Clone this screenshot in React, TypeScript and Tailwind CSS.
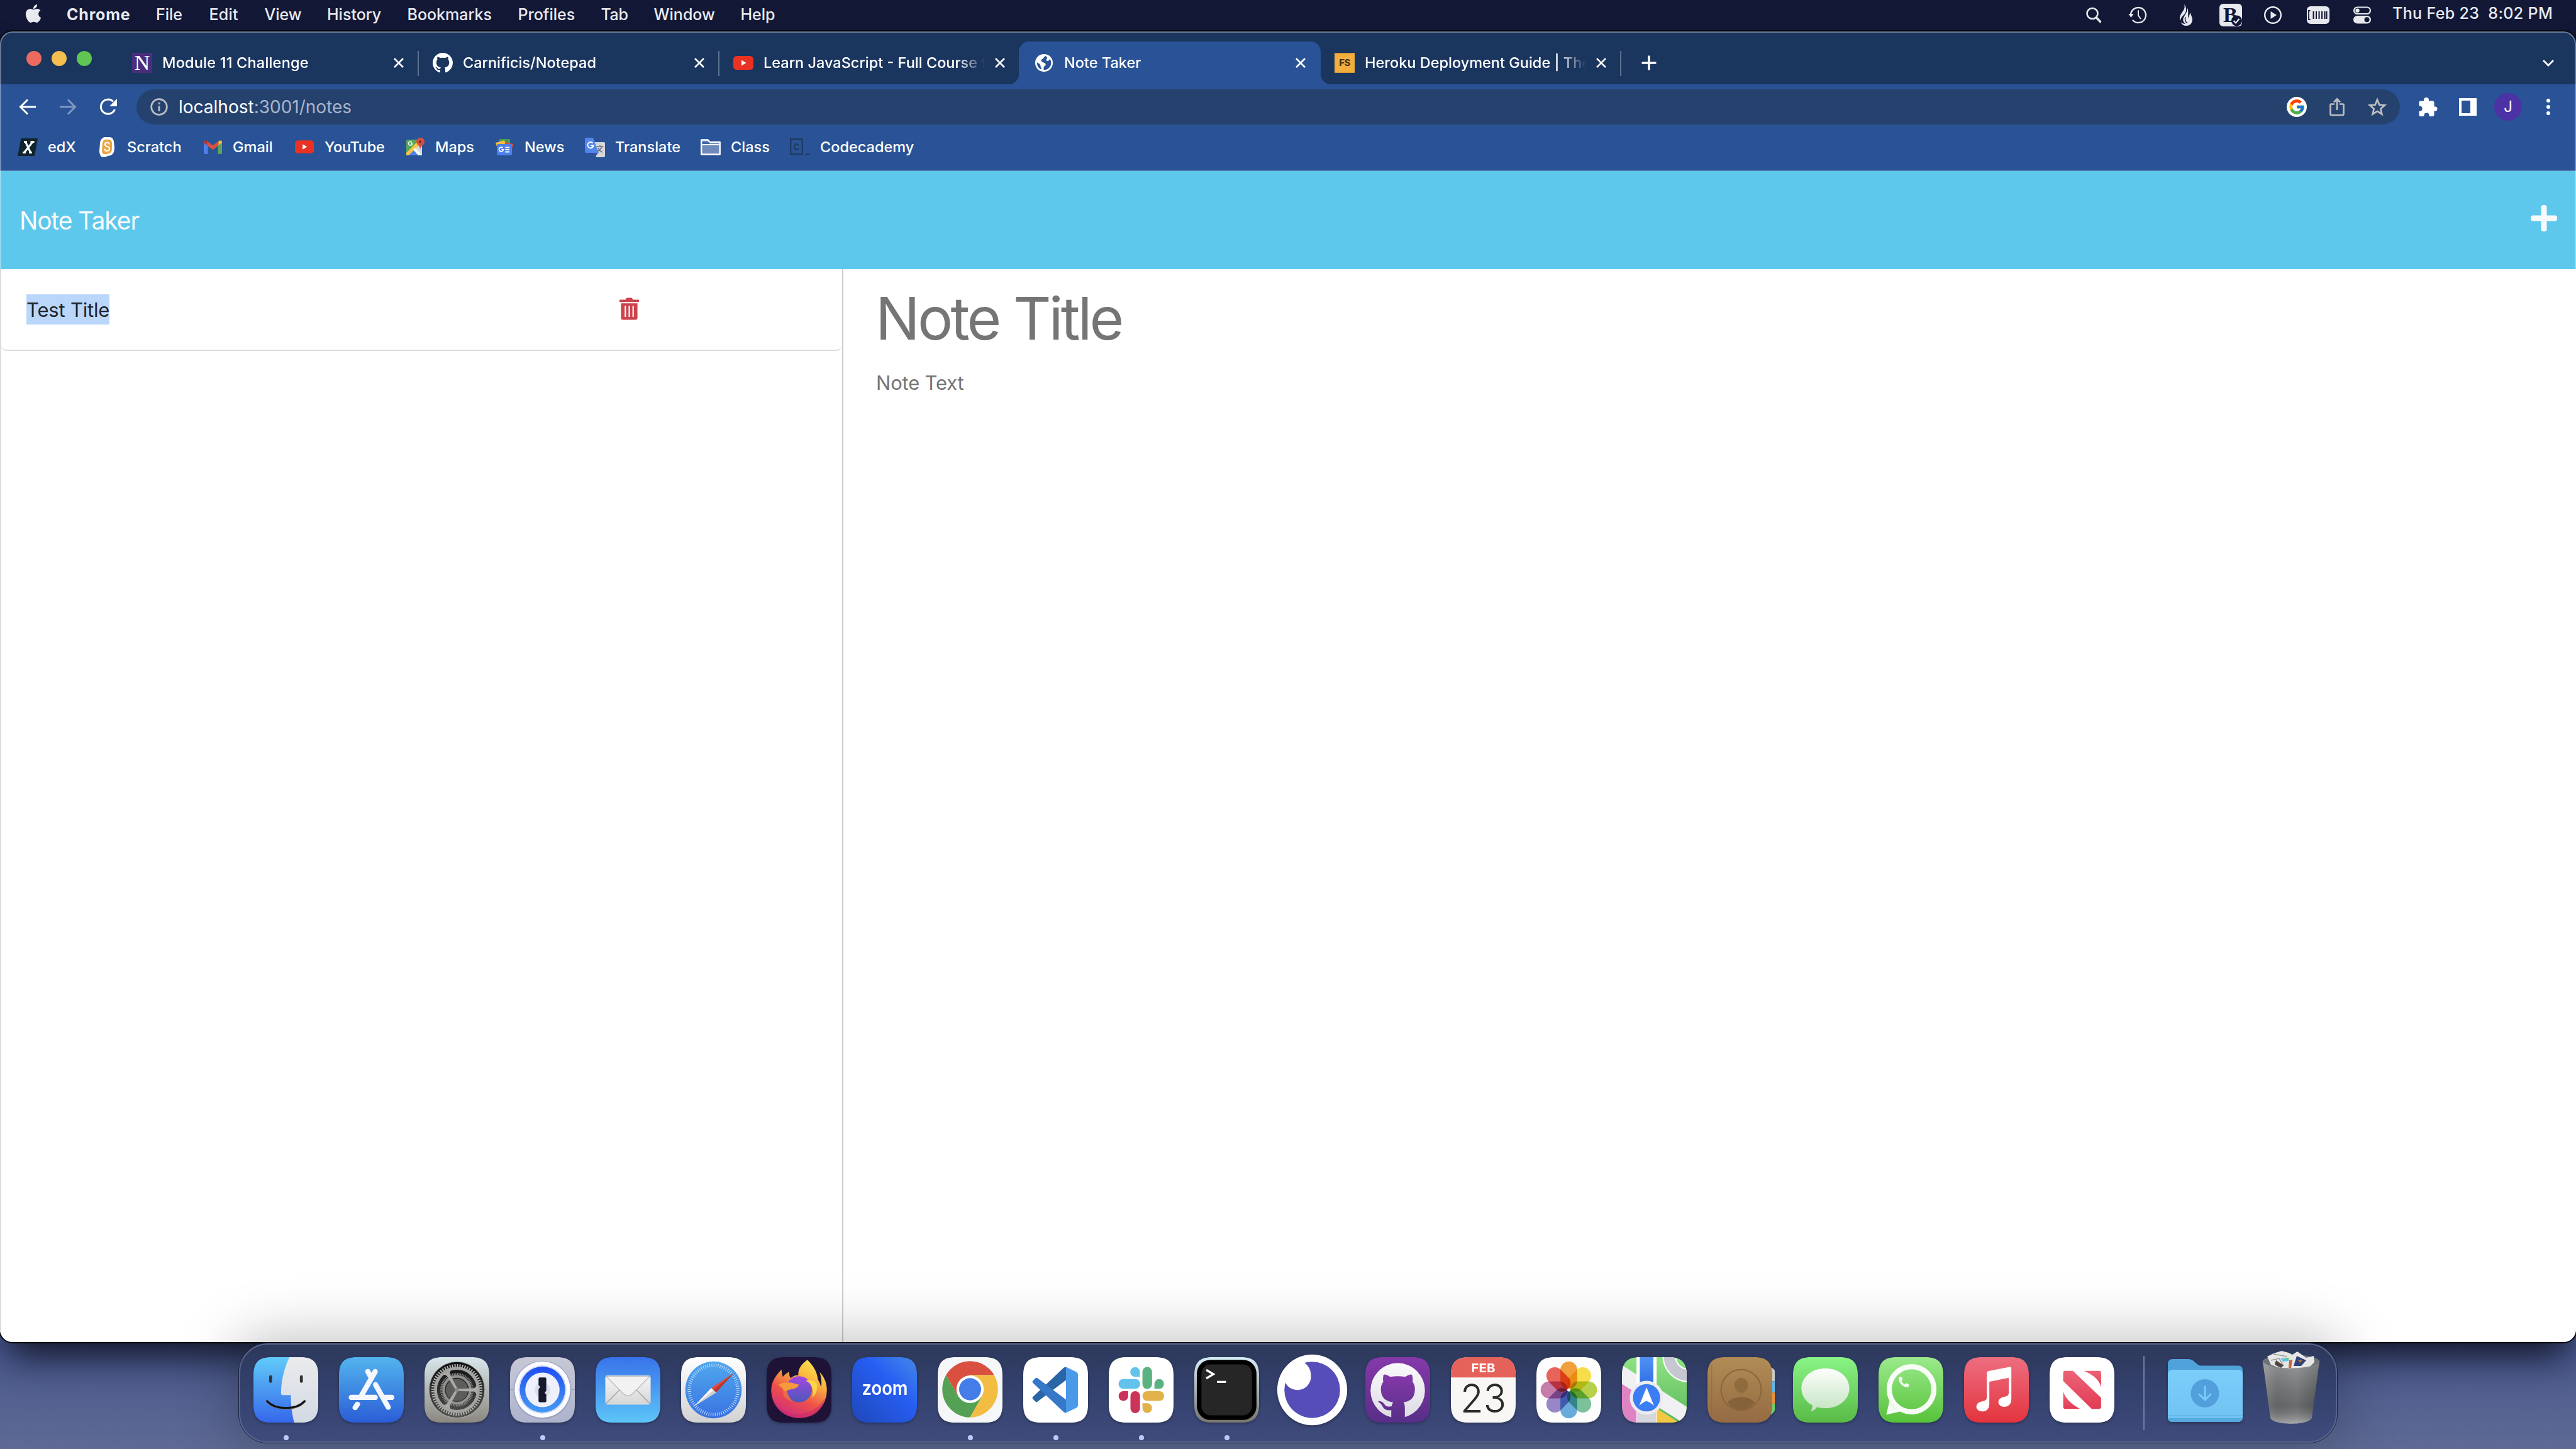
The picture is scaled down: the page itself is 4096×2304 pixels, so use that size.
import React from "react";
import { FaApple, FaPlus, FaPhoneAlt } from "react-icons/fa";
import { FcGoogle } from "react-icons/fc";

type Kids = { children?: React.ReactNode };

/* ---------------------------------------------------------------- menu bar */

const menus = [
  { t: "File", c: "w-[84.5px]" },
  { t: "Edit", c: "w-[88px] tracking-[0.2px]" },
  { t: "View", c: "w-[99.5px]" },
  { t: "History", c: "w-[127.5px]" },
  { t: "Bookmarks", c: "w-[176px]" },
  { t: "Profiles", c: "w-[132px]" },
  { t: "Tab", c: "w-[84px] tracking-[-0.4px]" },
  { t: "Window", c: "w-[138px]" },
  { t: "Help", c: "w-[60px]" },
];

function Slot({ c, children }: Kids & { c: string }) {
  return <div className={"flex h-full items-center justify-center " + c}>{children}</div>;
}

function MenuBar() {
  return (
    <div className="flex h-[50px] shrink-0 items-center pb-[3px] text-[25px] font-medium whitespace-pre text-[#e9eaef]">
      <div className="ml-[37px] w-[69px]">
        <FaApple className="mb-[4px] h-[33px] w-[32px]" />
      </div>
      <div className="w-[142px] font-bold tracking-[0.8px]">Chrome</div>
      {menus.map((m) => (
        <div key={m.t} className={m.c}>{m.t}</div>
      ))}
      <div className="ml-auto flex h-[50px] items-center">
        <Slot c="w-[70px]">
          <svg className="h-[28px] w-[28px]" viewBox="0 0 28 28" fill="none" stroke="currentColor" strokeLinecap="round">
            <circle cx="12" cy="11.500" r="8.500" strokeWidth="2.600" />
            <path d="M18.500 18l6 6.500" strokeWidth="3.400" />
          </svg>
        </Slot>
        <Slot c="w-[70px]">
          <svg className="h-[30px] w-[30px]" viewBox="0 0 30 30" fill="none" stroke="currentColor" strokeWidth="2.300" strokeLinecap="round">
            <path d="M4 15a12 12 0 1 1 3.500 8.500" />
            <path d="M0.500 13h8l-4 6z" fill="currentColor" stroke="none" />
            <path d="M16 8v7.500l3.500 5" strokeWidth="2" />
          </svg>
        </Slot>
        <Slot c="w-[84px]">
          <svg className="h-[34px] w-[24px]" viewBox="0 0 24 34" fill="currentColor">
            <path d="M9 0C11 6 8 9 5.500 13C2 18 1 22 3 26C3.500 21 6 19 9 16C13 12 13 4 9 0Z" />
            <path d="M13.500 5C15 11 11 15 9 19C6 24 7 28 11 31C8 31 5 30 3.500 28C5 32 8 34 12.500 34C18 34 22 30 22 24C22 20 19.500 18 19 13C17 16 17 19 16 22C14 18 17 10 13.500 5Z" />
            <path d="M11 20C9.500 24 11 28 14 29.500" fill="none" stroke="#131836" strokeWidth="1.400" />
          </svg>
        </Slot>
        <Slot c="w-[58px]">
          <svg className="h-[36px] w-[36px]" viewBox="0 0 36 36">
            <rect width="36" height="36" rx="6" fill="#e9eaef" />
            <text x="6" y="29" fontSize="34" fontWeight="700" fill="#131836" className="font-['Liberation_Serif']">B</text>
            <circle cx="27.500" cy="27" r="8.500" fill="#131836" />
            <path d="M22.500 27l3.500 3.500 5.500-6.500" fill="none" stroke="#e9eaef" strokeWidth="2.200" />
          </svg>
        </Slot>
        <Slot c="w-[76px]">
          <svg className="h-[30px] w-[30px]" viewBox="0 0 30 30">
            <circle cx="15" cy="15" r="12.800" fill="none" stroke="currentColor" strokeWidth="2.400" />
            <path d="M11.500 9v12l9.500-6z" fill="currentColor" />
          </svg>
        </Slot>
        <Slot c="w-[68px]">
          <svg className="h-[28px] w-[36px]" viewBox="0 0 36 28">
            <rect width="36" height="28" rx="6" fill="#e9eaef" />
            <path d="M5.500 7H3v14h2.500" fill="none" stroke="#131836" strokeWidth="1.800" />
            <path d="M10.500 8v12M15 8v12M19.500 8v12M24 8v12M28.500 8v12M31.500 8v12" fill="none" stroke="#131836" strokeWidth="2" />
          </svg>
        </Slot>
        <Slot c="w-[72px]">
          <svg className="h-[28px] w-[30px]" viewBox="0 0 30 28">
            <rect x="2" y="1.500" width="26" height="10.500" rx="5.250" fill="none" stroke="currentColor" strokeWidth="2.200" />
            <circle cx="7.500" cy="6.700" r="3.200" fill="currentColor" />
            <rect x="1" y="15" width="28" height="12.500" rx="6.250" fill="currentColor" />
            <circle cx="22.500" cy="21.200" r="4" fill="#131836" />
          </svg>
        </Slot>
        <div className="mb-[3px] ml-[12px] w-[292px] tracking-[0.35px]">Thu Feb 23  8:02 PM</div>
      </div>
    </div>
  );
}

/* -------------------------------------------------------------- tab strip */

const YouTube = ({ c }: { c: string }) => (
  <svg className={c} viewBox="0 0 32 22">
    <rect width="32" height="22" rx="5.500" fill="#ea3223" />
    <path d="M13 6.500v9l7.500-4.500z" fill="#fff" />
  </svg>
);

const Octocat = () => (
  <svg className="size-[32px]" viewBox="0 0 16 16" fill="#fff">
    <path d="M8 0C3.580 0 0 3.580 0 8c0 3.540 2.290 6.530 5.470 7.590.4.070.55-.17.55-.38 0-.19-.01-.82-.01-1.490-2.010.37-2.530-.49-2.690-.94-.09-.23-.48-.94-.82-1.130-.28-.15-.68-.52-.01-.53.63-.01 1.080.58 1.230.82.72 1.210 1.870.87 2.330.66.070-.52.28-.87.51-1.070-1.780-.2-3.640-.89-3.640-3.950 0-.87.31-1.590.82-2.150-.08-.2-.36-1.020.08-2.120 0 0 .67-.21 2.200.82.64-.18 1.320-.27 2-.27.68 0 1.360.09 2 .27 1.530-1.040 2.200-.82 2.200-.82.44 1.100.16 1.920.08 2.120.51.56.82 1.270.82 2.150 0 3.070-1.870 3.750-3.650 3.950.29.25.54.73.54 1.480 0 1.070-.01 1.930-.01 2.200 0 .21.15.46.55.38A8.012 8.012 0 0 0 16 8c0-4.420-3.580-8-8-8z" />
  </svg>
);

const Close = () => (
  <svg className="h-[18px] w-[18px]" viewBox="0 0 18 18" fill="none" stroke="#fff" strokeWidth="2.600">
    <path d="M2 2l14 14M16 2L2 16" />
  </svg>
);

function Tab({ icon, title, active, sep, tc = "" }: { icon: React.ReactNode; title: string; active?: boolean; sep?: boolean; tc?: string }) {
  return (
    <div className={"relative flex h-[68px] items-center rounded-t-[16px] " + (active ? "-ml-[2px] w-[480px] bg-[#295396] pl-[2px]" : "w-[478px]")}>
      {active && (
        <>
          <div className="absolute bottom-0 -left-[16px] size-[16px] bg-[radial-gradient(circle_at_0_0,transparent_15.5px,#295396_16.5px)]" />
          <div className="absolute -right-[16px] bottom-0 size-[16px] bg-[radial-gradient(circle_at_100%_0,transparent_15.5px,#295396_16.5px)]" />
        </>
      )}
      <div className="ml-[22px] flex size-[32px] items-center justify-center">{icon}</div>
      <div className={"ml-[16px] w-[367px] whitespace-pre [mask-image:linear-gradient(to_right,#000_308px,transparent_352px)] " + tc}>{title}</div>
      <Close />
      {sep && <div className="absolute top-[15px] right-0 h-[40px] w-[2px] bg-[#5c7391]" />}
    </div>
  );
}

function TabStrip() {
  return (
    <div className="relative flex h-[84px] shrink-0 items-end bg-[#1a355e] text-[23.5px] font-medium text-white">
      <div className="flex w-[188px] gap-[16px] pb-[29px] pl-[42px]">
        <div className="size-[24px] rounded-full bg-[#ec6a5e]" />
        <div className="size-[24px] rounded-full bg-[#f4bf4f]" />
        <div className="size-[24px] rounded-full bg-[#61c554]" />
      </div>
      <Tab
        sep
        tc="tracking-[0.2px]"
        title="Module 11 Challenge"
        icon={<div className="flex size-[32px] items-center justify-center bg-[#4a2e7d] font-['Liberation_Serif'] text-[34px] leading-none font-normal text-white">N</div>}
      />
      <Tab sep title="Carnificis/Notepad" icon={<Octocat />} />
      <Tab title="Learn JavaScript - Full Course f" icon={<YouTube c="h-[22px] w-[32px]" />} />
      <Tab
        active
        title="Note Taker"
        icon={
          <svg className="size-[28px]" viewBox="0 0 28 28">
            <circle cx="14" cy="14" r="14" fill="#fff" />
            <path d="M16 3C13 5.500 13.500 7 10.500 8.500C8 10 10 12 13.500 13.500C17 14.500 18 17 15 19C12.500 21 14 23 13.500 25.300C20 25.500 25.300 20.500 25.300 14C25.300 12 24.700 10 23.700 8.300C22 8.500 22 11 20 11C17.500 11 17 9 18.500 7.500C20 6 19 4 16 3Z" fill="#295396" />
            <path d="M2.800 13C5 15 7 15 8 17C9 19 8 20 10 22.500L10 24.500C5.500 23 2.500 18 2.800 13Z" fill="#295396" />
          </svg>
        }
      />
      <Tab
        sep
        title="Heroku Deployment Guide | The"
        icon={
          <div className="flex size-[32px] items-center justify-center border-y-2 border-[#d99a35] bg-[#f3af3d] text-[15px] font-bold tracking-[-0.5px] text-[#3a2b10]">FS</div>
        }
      />
      <svg className="mb-[22px] ml-[32px] size-[24px]" viewBox="0 0 24 24" stroke="#fff" strokeWidth="3.600" strokeLinecap="round">
        <path d="M12 2v20M2 12h20" />
      </svg>
      <svg className="mr-[34px] mb-[27px] ml-auto h-[13px] w-[20px]" viewBox="0 0 20 13" fill="none" stroke="#fff" strokeWidth="2.800">
        <path d="M2 2l8 8 8-8" />
      </svg>
    </div>
  );
}

/* ---------------------------------------------------------------- toolbar */

function Toolbar() {
  return (
    <div className="flex h-[72px] shrink-0 items-center bg-[#295396]">
      <svg className="ml-[30px] h-[26px] w-[27px]" viewBox="0 0 27 26" fill="none" stroke="#fff" strokeWidth="3">
        <path d="M27 13H3M14 1.500L2.500 13 14 24.500" />
      </svg>
      <svg className="ml-[38px] h-[26px] w-[27px]" viewBox="0 0 27 26" fill="none" stroke="#8098c1" strokeWidth="3">
        <path d="M0 13h24M13 1.500L24.500 13 13 24.500" />
      </svg>
      <svg className="ml-[36px] h-[28px] w-[28px]" viewBox="0 0 28 28" fill="none" stroke="#fff" strokeWidth="3">
        <path d="M24.500 18A11.500 11.500 0 1 1 22 5.500" />
        <path d="M28 1v12H16z" fill="#fff" stroke="none" />
      </svg>
      <div className="ml-[31px] flex h-[56px] w-[3599px] items-center rounded-full bg-[#25426f] pr-[21px] pl-[22px]">
        <svg className="h-[28px] w-[28px]" viewBox="0 0 28 28" fill="none" stroke="#bcbec1" strokeWidth="2.800">
          <circle cx="14" cy="14" r="12.300" />
          <path d="M14 12.500v8.500M14 7v3" />
        </svg>
        <div className="ml-[17px] text-[28px] text-[#a8b5ca]">
          <span className="text-white">localhost</span>:3001/notes
        </div>
        <div className="ml-auto flex items-center">
          <div className="flex size-[32px] items-center justify-center rounded-full bg-white">
            <FcGoogle className="size-[28px]" />
          </div>
          <svg className="ml-[35px] h-[30px] w-[26px]" viewBox="0 0 26 30" fill="none" stroke="#bcbec1" strokeWidth="2.700">
            <path d="M9 10.500H4a1.500 1.500 0 0 0-1.500 1.500v14.500A1.500 1.500 0 0 0 4 28h18a1.500 1.500 0 0 0 1.500-1.500V12a1.500 1.500 0 0 0-1.500-1.500h-5M13 20V3M8 7.500l5-5 5 5" />
          </svg>
          <svg className="ml-[36px] h-[30px] w-[30px]" viewBox="0 0 30 30" fill="none" stroke="#bcbec1" strokeWidth="2.700">
            <path d="M15 3.500l3.300 8.100 8.700.7-6.700 5.700 2.100 8.500L15 21.900l-7.400 4.600 2.100-8.500L3 12.300l8.700-.7z" />
          </svg>
        </div>
      </div>
      <svg className="ml-[30px] h-[30px] w-[30px]" viewBox="0 0 30 30" fill="#fff">
        <path d="M26 14.500h-1.500V8.500a3 3 0 0 0-3-3H16V4a4 4 0 0 0-8 0v1.500H3a2.500 2.500 0 0 0-2.500 2.500v5.500h1.500a4.200 4.200 0 0 1 0 8.300H.500V27.500A2.500 2.500 0 0 0 3 30h5.500v-1.500a4 4 0 0 1 8 0V30h5a3 3 0 0 0 3-3v-5.500H26a3.500 3.500 0 0 0 0-7z" />
      </svg>
      <div className="ml-[34px] h-[28px] w-[28px] border-4 border-r-[10px] border-white" />
      <div className="ml-[28px] flex size-[44px] items-center justify-center rounded-full bg-[#4d32a5] text-[24px] text-white">J</div>
      <div className="ml-[39px] flex flex-col gap-[4px]">
        <div className="size-[6px] rounded-full bg-white" />
        <div className="size-[6px] rounded-full bg-white" />
        <div className="size-[6px] rounded-full bg-white" />
      </div>
    </div>
  );
}

/* -------------------------------------------------------------- bookmarks */

const bookmarks = [
  {
    t: "edX", c: "w-[126px]", i: (
      <svg className="h-[28px] w-[32px]" viewBox="0 0 32 28">
        <path d="M5.500 0H32L27 28H0z" fill="#10262c" />
        <path d="M10 5.500h5M20.500 5.500h6M8 22.500h5M18 22.500h5M12.500 5.500l8 17M24 5.500l-13.500 17" fill="none" stroke="#fff" strokeWidth="3" />
      </svg>
    ),
  },
  {
    t: "Scratch", c: "w-[168px]", i: (
      <svg className="h-[32px] w-[24px]" viewBox="0 0 24 32">
        <path d="M8 0h9q5 1 6 7l1 9q0 9-4 12-3 2-7 2-2 2-6 2Q0 32 0 22L1 9Q2 2 8 0z" fill="#fff" />
        <path d="M9 4h7q4 1 4 6v8q0 8-6 8-2 2-6 1-4 0-4-6L5 9q1-4 4-5z" fill="#eda43f" />
        <path d="M16 11.500Q15 8.500 12 8.500q-3 0-3 3t3.500 3.500q3.500.500 3.500 3.500T12 22q-3.500 0-4-3.500" fill="none" stroke="#fff" strokeWidth="2.200" />
      </svg>
    ),
  },
  {
    t: "Gmail", c: "w-[146px]", i: (
      <svg className="h-[22px] w-[29px]" viewBox="0 0 29 22">
        <path d="M0 4v16a2 2 0 0 0 2 2h4.500V8.500z" fill="#4d80ee" />
        <path d="M22.500 22H27a2 2 0 0 0 2-2V4l-6.500 4.500z" fill="#57a65a" />
        <path d="M22.500 2.200v6.500L29 4V3q0-3-3.200-2.500z" fill="#f4bd41" />
        <path d="M0 3v1l6.500 4.700V2.200L4 .600Q0-.500 0 3z" fill="#b6332a" />
        <path d="M5.500 8.200V1.400l9 6.800 9-6.800v6.800l-9 7z" fill="#d95040" />
      </svg>
    ),
  },
  { t: "YouTube", c: "w-[176px] tracking-[-0.3px]", i: <YouTube c="h-[21px] w-[30px]" /> },
  {
    t: "Maps", c: "w-[142px]", i: (
      <svg className="h-[29px] w-[30px]" viewBox="0 0 30 29">
        <rect x="1" y="3" width="25" height="25" rx="2" fill="#57a65a" />
        <path d="M14 15.500L26 4V28H26z" fill="#d9dade" />
        <path d="M3 28L14 16.500 25 28z" fill="#4d80ee" />
        <path d="M1 24L19 6l4 4L5 28H1z" fill="#f6c544" />
        <path d="M15 16L26 28h-6L12 19z" fill="#fff" />
        <path d="M23 19q0-5-4-8a6.500 6.500 0 1 1 9 0q-4 3-5 8z" fill="#d95040" />
        <circle cx="23" cy="6.500" r="2.300" fill="#812b22" />
        <path d="M10 7.500a3 3 0 1 0 .5 2.300H8" fill="none" stroke="#fff" strokeWidth="1.500" />
      </svg>
    ),
  },
  {
    t: "News", c: "w-[144px]", i: (
      <svg className="h-[26px] w-[30px]" viewBox="0 0 30 26">
        <rect x="7" width="17" height="10" rx="1" fill="#4a9c50" />
        <path d="M1 6l14-4 3 10H3z" fill="#f4bd41" />
        <path d="M16 5l13 3-2 8H15z" fill="#d95040" />
        <rect x="3" y="8" width="24" height="18" rx="2" fill="#4d80ee" />
        <path d="M12.500 14.300a3.400 3.400 0 1 0 .8 2.700h-3M16.500 13.500h6.500M16.500 17h6.500M16.500 20.500h6.500" fill="none" stroke="#fff" strokeWidth="1.800" />
      </svg>
    ),
  },
  {
    t: "Translate", c: "w-[184px]", i: (
      <svg className="h-[32px] w-[32px]" viewBox="0 0 32 32">
        <path d="M12 8h18a2 2 0 0 1 2 2v20a2 2 0 0 1-2 2H18z" fill="#d5d6da" />
        <path d="M12 25h9l-5 7z" fill="#39509f" />
        <path d="M2 1h11l9 24H2a2 2 0 0 1-2-2V3a2 2 0 0 1 2-2z" fill="#5286ec" />
        <path d="M12.500 9.500a4.700 4.700 0 1 0 1.200 4H9.300" fill="none" stroke="#fff" strokeWidth="1.900" />
        <path d="M18.500 15h11M24 13v2M27 15q-2 6-8 8M21 17q2 5 7 7" fill="none" stroke="#6a7787" strokeWidth="1.700" />
      </svg>
    ),
  },
  {
    t: "Class", c: "w-[142px]", i: (
      <svg className="h-[26px] w-[32px]" viewBox="0 0 32 26">
        <path d="M1.200 24.500V1.500h10.500l3 3.500h16v19.500z" fill="#6f8aba" stroke="#fff" strokeWidth="2.400" strokeLinejoin="round" />
        <path d="M2.500 6.500h11.500" stroke="#295396" strokeWidth="2" />
        <path d="M2 9h28" stroke="#fff" strokeWidth="1.800" />
      </svg>
    ),
  },
  {
    t: "Codecademy", c: "w-[220px]", i: (
      <svg className="h-[27px] w-[32px]" viewBox="0 0 32 27" fill="none" stroke="#1f3a61" strokeWidth="2.200">
        <rect x="1.200" y="1.200" width="18.500" height="24" />
        <path d="M13.500 11.500q-.5-2.500-3-2.500-3.500 0-3.500 4.500T10.500 18q2.500 0 3-2.500M24 25.500h8" />
      </svg>
    ),
  },
];

function Bookmarks() {
  return (
    <div className="flex h-[66px] shrink-0 items-center border-b-2 border-[#5076ab] bg-[#295396] pb-[9px] pl-[27px] text-[23.5px] font-medium text-white">
      {bookmarks.map((b) => (
        <div key={b.t} className={"flex shrink-0 items-center gap-[15px] " + b.c}>
          <div className="flex w-[34px] shrink-0 items-center justify-center">{b.i}</div>
          <span>{b.t}</span>
        </div>
      ))}
    </div>
  );
}

/* -------------------------------------------------------------- note page */

function NotePage() {
  return (
    <div className="flex grow flex-col bg-white">
      <div className="flex h-[156px] shrink-0 items-center justify-between bg-[#5dc8ec] pr-[28px] pl-[31px] text-[#f8f9fa]">
        <div className="pt-[2px] text-[39px] tracking-[-1.1px]">Note Taker</div>
        <FaPlus className="mb-[6px] h-[48px] w-[46px]" />
      </div>
      <div className="flex grow">
        <div className="w-[1341px] border-r-2 border-l-2 border-r-[#cccccd] border-l-[#dcdcdc]">
          <div className="flex h-[130px] w-[1336px] items-start rounded-b-[8px] border-b-2 border-[#dddddd] pt-[40px] pl-[40px]">
            <div className="h-[48px] w-[132px] bg-[#bad6fb] text-[31px] leading-[50px] tracking-[-0.2px] whitespace-nowrap text-[#212529]">Test Title</div>
            <svg className="mt-[5px] ml-[811px] h-[36px] w-[31px]" viewBox="0 0 32 36">
              <path d="M1 3h9l1-2q.5-1 2-1h6q1.500 0 2 1l1 2h9q1 0 1 1v2q0 1-1 1H1q-1 0-1-1V4q0-1 1-1z" fill="#cc434c" />
              <path fillRule="evenodd" d="M2.500 9h27l0 24q0 3-3 3h-21q-3 0-3-3zM8.500 13v18.500h2.200V13zM14.900 13v18.500h2.200V13zM21.300 13v18.500h2.200V13z" fill="#cc434c" />
            </svg>
          </div>
        </div>
        <div className="pl-[52px] text-[#757575]">
          <div className="mt-[21px] -ml-[1px] text-[94px] leading-[114px] tracking-[-3.85px]">Note Title</div>
          <div className="mt-[22px] text-[31px] leading-[48px] tracking-[-0.2px]">Note Text</div>
        </div>
      </div>
    </div>
  );
}

/* ------------------------------------------------------------------- dock */

const petals = ["#f2a03c", "#f7e04a", "#b9d34a", "#7cc49c", "#6aaede", "#9a87c8", "#c87eae", "#ea655c"];

const Grad = ({ id, a, b }: { id: string; a: string; b: string }) => (
  <linearGradient id={id} x1="0" y1="0" x2="0" y2="1">
    <stop offset="0" stopColor={a} />
    <stop offset="1" stopColor={b} />
  </linearGradient>
);

const Sq = ({ fill }: { fill: string }) => (
  <path d="M0 28C0 8 8 0 28 0H72C92 0 100 8 100 28V72C100 92 92 100 72 100H28C8 100 0 92 0 72Z" fill={fill} />
);

const apps: { n: string; dot?: boolean; art: React.ReactNode }[] = [
  {
    n: "finder", dot: true, art: (
      <>
        <defs><Grad id="fa" a="#61cbf9" b="#3567ea" /><Grad id="fb" a="#ebebed" b="#d2d9e3" /></defs>
        <Sq fill="url(#fa)" />
        <path d="M55.600 0C47 17 42.600 38 42.600 55Q42.600 58 45 58H57.800C57.800 74 59.500 88 63 100H72C92 100 100 92 100 72V28C100 8 92 0 72 0Z" fill="url(#fb)" />
        <path d="M26.500 30v7M74 30v7" stroke="#333" strokeWidth="4.600" strokeLinecap="round" />
        <path d="M21 68C34 82 66 82 79 68" fill="none" stroke="#666" strokeWidth="3.200" strokeLinecap="round" />
        <path d="M21 67C34 81 66 81 79 67" fill="none" stroke="#111" strokeWidth="2.800" strokeLinecap="round" />
      </>
    ),
  },
  {
    n: "appstore", art: (
      <>
        <defs><Grad id="as" a="#52b4ee" b="#2b5dd6" /></defs>
        <Sq fill="url(#as)" />
        <g stroke="#f4f8fe" strokeWidth="8" strokeLinecap="round">
          <path d="M44.500 22L49 30M56.500 42L76 76.500M56 22L35 58M19 61.500H56M71 61.500H81.500M28.500 72L25 77" />
        </g>
      </>
    ),
  },
  {
    n: "settings", art: (
      <>
        <defs><Grad id="se" a="#d8e6eb" b="#8c8880" /><Grad id="sd" a="#0c0f10" b="#53524f" /></defs>
        <Sq fill="url(#se)" />
        <circle cx="50" cy="50" r="43.500" fill="#a8aaa8" />
        <circle cx="50" cy="50" r="42.500" fill="url(#sd)" />
        <circle cx="50" cy="50" r="37" fill="none" stroke="#b4b4b1" strokeWidth="5" strokeDasharray="1.900 1.970" />
        <circle cx="50" cy="50" r="33" fill="none" stroke="#a3a4a2" strokeWidth="4.500" />
        <circle cx="50" cy="50" r="24" fill="none" stroke="#8a8b89" strokeWidth="3.500" strokeDasharray="1.300 1.200" />
        <circle cx="50" cy="50" r="20.500" fill="none" stroke="#8f908e" strokeWidth="4" />
        <circle cx="50" cy="50" r="17" fill="#5d5e5c" />
        {[0, 120, 240].map((r) => (
          <path key={r} d="M50 48.300L76 47.500Q80 46 81 41V59Q80 54 76 52.500L50 51.700Z" fill="#aaaba9" transform={`rotate(${r} 50 50)`} />
        ))}
        <circle cx="50" cy="50" r="3" fill="#8a8b89" />
      </>
    ),
  },
  {
    n: "1password", dot: true, art: (
      <>
        <defs><Grad id="pw" a="#c6c8d5" b="#adb3cc" /><Grad id="pb" a="#1f4df0" b="#469af4" /></defs>
        <Sq fill="url(#pw)" />
        <path d="M0 49.500H100" stroke="#999eb4" strokeWidth="1" />
        <circle cx="50" cy="50" r="44.500" fill="#9ba0bd" />
        <circle cx="50" cy="49.500" r="43" fill="#fbfcff" />
        <circle cx="50" cy="49.500" r="37" fill="#d3daf2" />
        <circle cx="50" cy="49.500" r="35" fill="url(#pb)" />
        <circle cx="50" cy="50" r="26.500" fill="#eef0fb" />
        <circle cx="50" cy="50" r="12" fill="#dadff0" />
        <path d="M46 31h8q2 0 2 2v18l-2.500 3.500 2.500 3V67q0 2-2 2h-8q-2 0-2-2V49l2.500-3.500-2.500-3V33q0-2 2-2z" fill="#17182c" />
      </>
    ),
  },
  {
    n: "mail", art: (
      <>
        <defs><Grad id="ma" a="#3873ea" b="#5dc5f8" /><Grad id="mb" a="#f6f6f6" b="#d6d6d6" /></defs>
        <Sq fill="url(#ma)" />
        <rect x="15" y="28" width="70" height="44.500" rx="4" fill="url(#mb)" />
        <path d="M16 71L37 50M84 71L63 50" stroke="#a9a9a9" strokeWidth="1.500" />
        <path d="M16 29L43 56Q50 62 57 56L84 29Z" fill="#f2f2f2" stroke="#b5b5b5" strokeWidth="1.200" />
      </>
    ),
  },
  {
    n: "safari", art: (
      <>
        <defs><Grad id="sa" a="#ffffff" b="#d2d2d2" /><Grad id="sb" a="#4fa8ee" b="#3a72e2" /></defs>
        <Sq fill="url(#sa)" />
        <circle cx="50" cy="50" r="43.500" fill="url(#sb)" />
        <circle cx="50" cy="50" r="37.500" fill="none" stroke="#d3e5fa" strokeWidth="5" strokeDasharray=".9 2.373" />
        <path d="M81.500 24L46.500 47L54 54Z" fill="#e2493d" />
        <path d="M81.500 24L50 50.500L54 54Z" fill="#b8362c" />
        <path d="M20 75L46.500 47L54 54Z" fill="#fbfbfb" />
        <path d="M20 75L50 50.500L54 54Z" fill="#cfcfcf" />
      </>
    ),
  },
  {
    n: "firefox", art: (
      <>
        <defs>
          <linearGradient id="ff" x1=".8" y1="0" x2=".3" y2="1">
            <stop offset="0" stopColor="#fbe84e" /><stop offset=".3" stopColor="#f9b83f" />
            <stop offset=".65" stopColor="#ee5048" /><stop offset="1" stopColor="#cf2b83" />
          </linearGradient>
          <Grad id="fp" a="#a347e4" b="#4d58b8" />
        </defs>
        <Sq fill="#1e1236" />
        <path d="M63 4C72 13 78 22 79 34Q83 40 84 46Q86 34 82 23C90 31 93 41 93 51A43 42 0 0 1 7 51C7 38 14 28 23 19Q23 25 25 30Q29 25 35 22Q34 28 37 32C41 29 45 27 49 28C48 18 54 10 63 4Z" fill="url(#ff)" />
        <path d="M8 56Q14 84 44 87Q76 87 90 62Q84 93 50 93Q14 91 8 56Z" fill="#c62a6c" opacity=".55" />
        <circle cx="50" cy="49" r="20" fill="url(#fp)" />
        <path d="M31 45Q31 60 40 67Q30 66 26 58Q24 50 27 44Z" fill="#ee6a48" />
        <path d="M60 36Q66 38 69 44Q74 52 70 62Q80 54 77 40Q70 33 60 36Z" fill="#fbd548" />
        <path d="M18 42Q26 38 38 39L50 42Q48 47 41 48.500Q32 50 28 52Q24 46 18 42Z" fill="#f49a3c" />
      </>
    ),
  },
  {
    n: "zoom", art: (
      <>
        <defs>
          <linearGradient id="zo" x1="1" y1="0" x2="0" y2="1">
            <stop offset="0" stopColor="#4389ea" /><stop offset=".4" stopColor="#265df2" /><stop offset="1" stopColor="#1f48b8" />
          </linearGradient>
        </defs>
        <Sq fill="url(#zo)" />
        <text x="15" y="57.500" fontSize="29" fontWeight="600" textLength="71" lengthAdjust="spacingAndGlyphs" fill="#fff">zoom</text>
      </>
    ),
  },
  {
    n: "chrome", dot: true, art: (
      <>
        <Sq fill="#f5f6f8" />
        <path d="M14 70Q50 108 86 70V62H14z" fill="#c9b98e" opacity=".35" />
        <path d="M12.800 27.500A43 43 0 0 1 87.200 27.500H50L31.400 59.700Z" fill="#d95040" />
        <path d="M12.800 27.500L31.400 59.700L50 70L68.600 59.700L50 92A43 43 0 0 1 12.800 27.500Z" fill="#54a155" />
        <path d="M50 27.500H87.200A43 43 0 0 1 50 92L68.600 59.700Z" fill="#f2bd42" />
        <circle cx="50" cy="49" r="21" fill="#fff" />
        <circle cx="50" cy="49" r="17" fill="#447de8" />
      </>
    ),
  },
  {
    n: "vscode", dot: true, art: (
      <>
        <Sq fill="#fff" />
        <path d="M66 15L66 35L22 68Q20 69 18.500 67.500L14.500 63.500Q13.500 62 15 60.500L62 16.500Q64 15 66 15Z" fill="#2a65a6" />
        <path d="M66 85L66 65L22 32Q20 31 18.500 32.500L14.500 36.500Q13.500 38 15 39.500L62 83.500Q64 85 66 85Z" fill="#3478c7" />
        <path d="M66 15L82 22.500Q84.500 24 84.500 26V74Q84.500 76 82 77.500L66 85Z" fill="#4b9ae9" />
      </>
    ),
  },
  {
    n: "slack", dot: true, art: (
      <>
        <Sq fill="#fff" />
        <path d="M48 30H41a7.400 7.400 0 1 1 7-7.500z" fill="#62c2ec" />
        <rect x="15" y="33.500" width="33.500" height="14.800" rx="7.400" fill="#62c2ec" />
        <rect x="52" y="15" width="14.800" height="33.500" rx="7.400" fill="#5ab280" />
        <path d="M70.500 48.300V41a7.400 7.400 0 1 1 7.400 7.300z" fill="#5ab280" />
        <rect x="33.500" y="52" width="14.800" height="33.500" rx="7.400" fill="#cc335b" />
        <path d="M30 52v7.400a7.400 7.400 0 1 1-7.400-7.400z" fill="#cc335b" />
        <rect x="52" y="52" width="33.500" height="14.800" rx="7.400" fill="#e1b24a" />
        <path d="M52 70.500h7.400a7.400 7.400 0 1 1-7.400 7.400z" fill="#e1b24a" />
      </>
    ),
  },
  {
    n: "terminal", dot: true, art: (
      <>
        <defs><Grad id="te" a="#d6edf5" b="#77746e" /></defs>
        <Sq fill="url(#te)" />
        <rect x="4" y="4" width="92" height="92" rx="21" fill="#000" />
        <rect x="11" y="11" width="78" height="78" rx="14" fill="#262626" />
        <path d="M18.500 19.500L29.500 26L18.500 32.500" fill="none" stroke="#fff" strokeWidth="3.200" />
        <path d="M35 37.800H49" stroke="#fff" strokeWidth="3.200" />
      </>
    ),
  },
  {
    n: "insomnia", art: (
      <>
        <circle cx="50" cy="50" r="54" fill="#fff" />
        <circle cx="50" cy="50" r="43" fill="#564db8" />
        <path d="M38 8.500Q48 16 48 27A21 21 0 0 1 8.500 39L7 26L24 8z" fill="#fff" />
      </>
    ),
  },
  {
    n: "github", art: (
      <>
        <defs><Grad id="gh" a="#8539a9" b="#582e88" /><Grad id="gw" a="#fafafc" b="#dcdbe4" /></defs>
        <Sq fill="url(#gh)" />
        <circle cx="50" cy="51" r="42" fill="url(#gw)" />
        <path d="M28 27Q30 25 38.500 30Q50 28 61.500 30Q70 25 72 27Q74 32 73 38Q77 43 76.500 50C76 62 70 67.500 59 69Q61 72 61 78V96H40V81C30 82 28 78 26 74Q24 70 20 68.500Q19 67 22 67Q27 68 29.500 72Q33 77 40.500 75Q41 71 43 69C31 67.500 24.500 62 24 50Q23.500 43 27.500 38Q26.500 32 28 27Z" fill="url(#gh)" />
      </>
    ),
  },
  {
    n: "calendar", art: (
      <>
        <Sq fill="#f8f7f6" />
        <path d="M0 31V28C0 8 8 0 28 0H72C92 0 100 8 100 28V31Z" fill="#e5625a" />
        <text x="31.500" y="23.500" fontSize="18" fontWeight="700" textLength="37" lengthAdjust="spacingAndGlyphs" fill="#fff">FEB</text>
        <text x="14.500" y="85" fontSize="61" fontWeight="300" textLength="71" lengthAdjust="spacingAndGlyphs" fill="#2b2b2b">23</text>
      </>
    ),
  },
  {
    n: "photos", art: (
      <>
        <Sq fill="#fdfdfd" />
        {petals.map((p, k) => (
          <rect key={p} x="37" y="6.500" width="26" height="42" rx="13" fill={p} className="mix-blend-multiply" transform={`rotate(${k * 45} 50 50)`} />
        ))}
        <circle cx="50" cy="50" r="2.500" fill="#fff" opacity=".8" />
      </>
    ),
  },
  {
    n: "maps", art: (
      <>
        <defs>
          <clipPath id="mc"><path d="M0 28C0 8 8 0 28 0H72C92 0 100 8 100 28V72C100 92 92 100 72 100H28C8 100 0 92 0 72Z" /></clipPath>
          <Grad id="mg" a="#8fe382" b="#5cb85c" /><Grad id="ml" a="#5093f2" b="#2f6ee8" />
        </defs>
        <g clipPath="url(#mc)">
          <rect width="100" height="100" fill="url(#mg)" />
          <path d="M0 12L100 76V104L0 41z" fill="#f0f0f3" />
          <path d="M0 41L24 56V100H0z" fill="#df83c4" />
          <path d="M53 78L88 100H53z" fill="#f2c843" />
          <rect x="22.500" width="31" height="100" fill="#fff" />
          <rect x="23.500" y="80" width="29" height="20" fill="#d6d7de" />
          <rect x="27.500" width="21" height="42" fill="url(#ml)" />
          <circle cx="103" cy="-2" r="30" fill="none" stroke="#fff" strokeWidth="21" />
          <circle cx="103" cy="-2" r="30" fill="none" stroke="#c6c7d0" strokeWidth="17" />
          <circle cx="38" cy="62" r="26" fill="#ececf0" />
          <circle cx="38" cy="62" r="21" fill="#3b7df2" />
          <path d="M38 46L49.500 74.500Q43 68 38 67Q33 68 26.500 74.500Z" fill="#fff" />
        </g>
      </>
    ),
  },
  {
    n: "contacts", art: (
      <>
        <defs><Grad id="co" a="#b18c55" b="#946b43" /></defs>
        <path d="M90 14Q104 16 104 22V37H90z" fill="#c9c9c9" />
        <path d="M90 37H104V54H90z" fill="#62b8ee" />
        <path d="M90 54H104V71H90z" fill="#ef9136" />
        <path d="M90 71H104V80Q104 86 90 92z" fill="#6fd067" />
        <Sq fill="url(#co)" />
        <path d="M6.500 12V88" stroke="#8a6a3f" strokeWidth="1.500" opacity=".6" />
        <circle cx="52" cy="50" r="31" fill="none" stroke="#8a663a" strokeWidth="2" />
        <ellipse cx="52" cy="43" rx="10.500" ry="11.500" fill="#8f6c3e" />
        <path d="M31 69Q38 61 52 61T73 69Q65 80.500 52 80.500T31 69Z" fill="#86623a" />
      </>
    ),
  },
  {
    n: "messages", art: (
      <>
        <defs><Grad id="me" a="#8af486" b="#59ba46" /><Grad id="mf" a="#fdfefd" b="#c4e3c0" /></defs>
        <Sq fill="url(#me)" />
        <path d="M50 17C71 17 87 30.500 87 47.500S71 78 50 78Q43 78 37 76.500Q33 82 27 82.500Q30 79 30 73.500C19 68 13 58 13 47.500C13 30.500 29 17 50 17Z" fill="url(#mf)" />
      </>
    ),
  },
  {
    n: "whatsapp", art: (
      <>
        <defs><Grad id="wa" a="#9bea8c" b="#57c23a" /></defs>
        <Sq fill="url(#wa)" />
        <path d="M12 88L17 66Q22 78 34 83Z" fill="#f5fbf4" />
        <circle cx="51" cy="49" r="34.500" fill="none" stroke="#f8fcf7" strokeWidth="8" />
        <FaPhoneAlt x="31" y="30" width="39" height="39" className="text-[#f8fcf7]" />
      </>
    ),
  },
  {
    n: "music", art: (
      <>
        <defs><Grad id="mu" a="#ed6e80" b="#e3343e" /></defs>
        <Sq fill="url(#mu)" />
        <path d="M35 24Q35 22 37 21.500L70 15Q73 14.500 73 17V65C73 72 68 76 62 76C56 76 53 72 53 69C53 64 57 61.500 62 60.500Q69 59.500 69 55V31.500L39 37.500V72C39 79 34 83 28 83C22 83 19 79 19 76C19 71 23 68.500 28 67.500Q35 66.500 35 62Z" fill="#fff" />
      </>
    ),
  },
  {
    n: "news", art: (
      <>
        <defs><Grad id="ne" a="#ec6377" b="#e23c55" /></defs>
        <Sq fill="#fff" />
        <path d="M24 21H36L79.500 62V76Q79.500 79 76.500 79H65L21 36.500V24Q21 21 24 21Z" fill="url(#ne)" />
        <path d="M53 21H76.500Q79.500 21 79.500 24V47Q77 31 53 21Z" fill="url(#ne)" />
        <path d="M21 53Q27 69 47 79H24Q21 79 21 76Z" fill="url(#ne)" />
      </>
    ),
  },
];

function Dock() {
  return (
    <div className="relative mx-auto mt-[2px] flex h-[158px] w-[3336px] shrink-0 rounded-[46px] border-2 border-[#57638b] bg-[linear-gradient(#2e385b,#34426f_50%,#3f4b7c)] pt-[20px] pl-[21px] shadow-[0_0_0_1px_#1d2340,0_0_90px_10px_rgba(0,0,0,0.25)]">
      {apps.map((a) => (
        <div key={a.n} className="flex w-[136px] shrink-0 flex-col items-start">
          <svg className="h-[104px] w-[103px] overflow-visible drop-shadow-[0_2px_2px_rgba(0,0,0,0.3)]" viewBox="0 0 100 100" preserveAspectRatio="none">{a.art}</svg>
          {a.dot && <div className="mt-[20px] ml-[48px] size-[8px] rounded-full bg-[#bec9f8]" />}
        </div>
      ))}
      <div className="-mt-[2px] ml-[13px] h-[118px] w-[2px] bg-[#6f7ba5]" />
      <svg className="mt-[3px] ml-[37px] h-[100px] w-[119px] drop-shadow-[0_2px_2px_rgba(0,0,0,0.3)]" viewBox="0 0 119 100">
        <defs><Grad id="fo" a="#7bcdfa" b="#70c2f2" /></defs>
        <path d="M0 8Q0 0 8 0H32Q38 0 42 4L48 9Q50 10.500 54 10.500H112Q119 10.500 119 17V40H0Z" fill="#4fa2da" />
        <path d="M0 25Q0 17 7 17H112Q119 17 119 25V92Q119 100 111 100H8Q0 100 0 92Z" fill="url(#fo)" />
        <path d="M0 94H119Q118 100 111 100H8Q1 100 0 94Z" fill="#55aae0" />
        <path d="M0 89.500H119" stroke="#62b5e8" strokeWidth="1.200" />
        <circle cx="59" cy="54.500" r="22.500" fill="#539fdc" />
        <path d="M59 44V64M50 56L59 65L68 56" fill="none" stroke="#7bcdfa" strokeWidth="2.800" strokeLinecap="round" />
      </svg>
      <svg className="-mt-[10px] ml-[31px] h-[120px] w-[92px]" viewBox="0 0 92 120">
        <defs>
          <linearGradient id="tr" x1="0" y1="0" x2="1" y2="0">
            <stop offset="0" stopColor="#8c8e8f" /><stop offset=".25" stopColor="#737576" />
            <stop offset=".6" stopColor="#7d8081" /><stop offset="1" stopColor="#5d6061" />
          </linearGradient>
          <linearGradient id="ts" x1="0" y1="0" x2="0" y2="1">
            <stop offset="0" stopColor="#fff" stopOpacity=".2" /><stop offset=".7" stopColor="#000" stopOpacity=".15" />
            <stop offset="1" stopColor="#fff" stopOpacity=".35" />
          </linearGradient>
        </defs>
        <ellipse cx="46" cy="17" rx="45.500" ry="11" fill="#6c7277" />
        <path d="M8 9L18 4L31 0L42 3L48 6L56 1L70 11L82 8L83 18L76 25L52 29L30 28L14 22Z" fill="#e6e6e6" />
        <path d="M18 5L40 9M14 15L27 12L34 24M20 18L30 26" stroke="#9a9a9a" strokeWidth="1.500" fill="none" />
        <path d="M29 12L42 11V16L33 17Z" fill="#58c3ee" />
        <path d="M36 11h7l-2 4z" fill="#72ca4d" />
        <path d="M22 15L34 23L30 27L20 22Z" fill="#4b4440" />
        <path d="M43 15L48 14L46 27H42Z" fill="#c5653c" />
        <path d="M55 8L70 15L62 24H50Z" fill="#2f4377" />
        <path d="M57 14l7 1-4 4z" fill="#c96a35" />
        <path d="M1 17C10 31 82 31 91 17L79 106C76 119 16 119 13 106Z" fill="url(#tr)" />
        <path d="M1 17C10 31 82 31 91 17L79 106C76 119 16 119 13 106Z" fill="url(#ts)" />
      </svg>
    </div>
  );
}

export default function App() {
  return (
    <div className="flex h-[2304px] w-[4096px] flex-col overflow-hidden bg-[linear-gradient(#131836_0px,#131836_60px,#3f5088_2000px,#4a598f_2150px,#5e6a94_2304px)] font-['Inter',sans-serif]">
      <MenuBar />
      <div className="relative flex h-[2084px] shrink-0 flex-col overflow-visible rounded-[20px] shadow-[0_0_0_2px_#05070d,0_34px_60px_-14px_rgba(8,10,20,0.9)]">
        <div className="flex grow flex-col overflow-hidden rounded-[20px]">
          <TabStrip />
          <Toolbar />
          <Bookmarks />
          <NotePage />
        </div>
        <div className="pointer-events-none absolute inset-x-0 top-0 h-[378px] rounded-t-[20px] border-x-2 border-t-2 border-white/35" />
      </div>
      <Dock />
    </div>
  );
}
